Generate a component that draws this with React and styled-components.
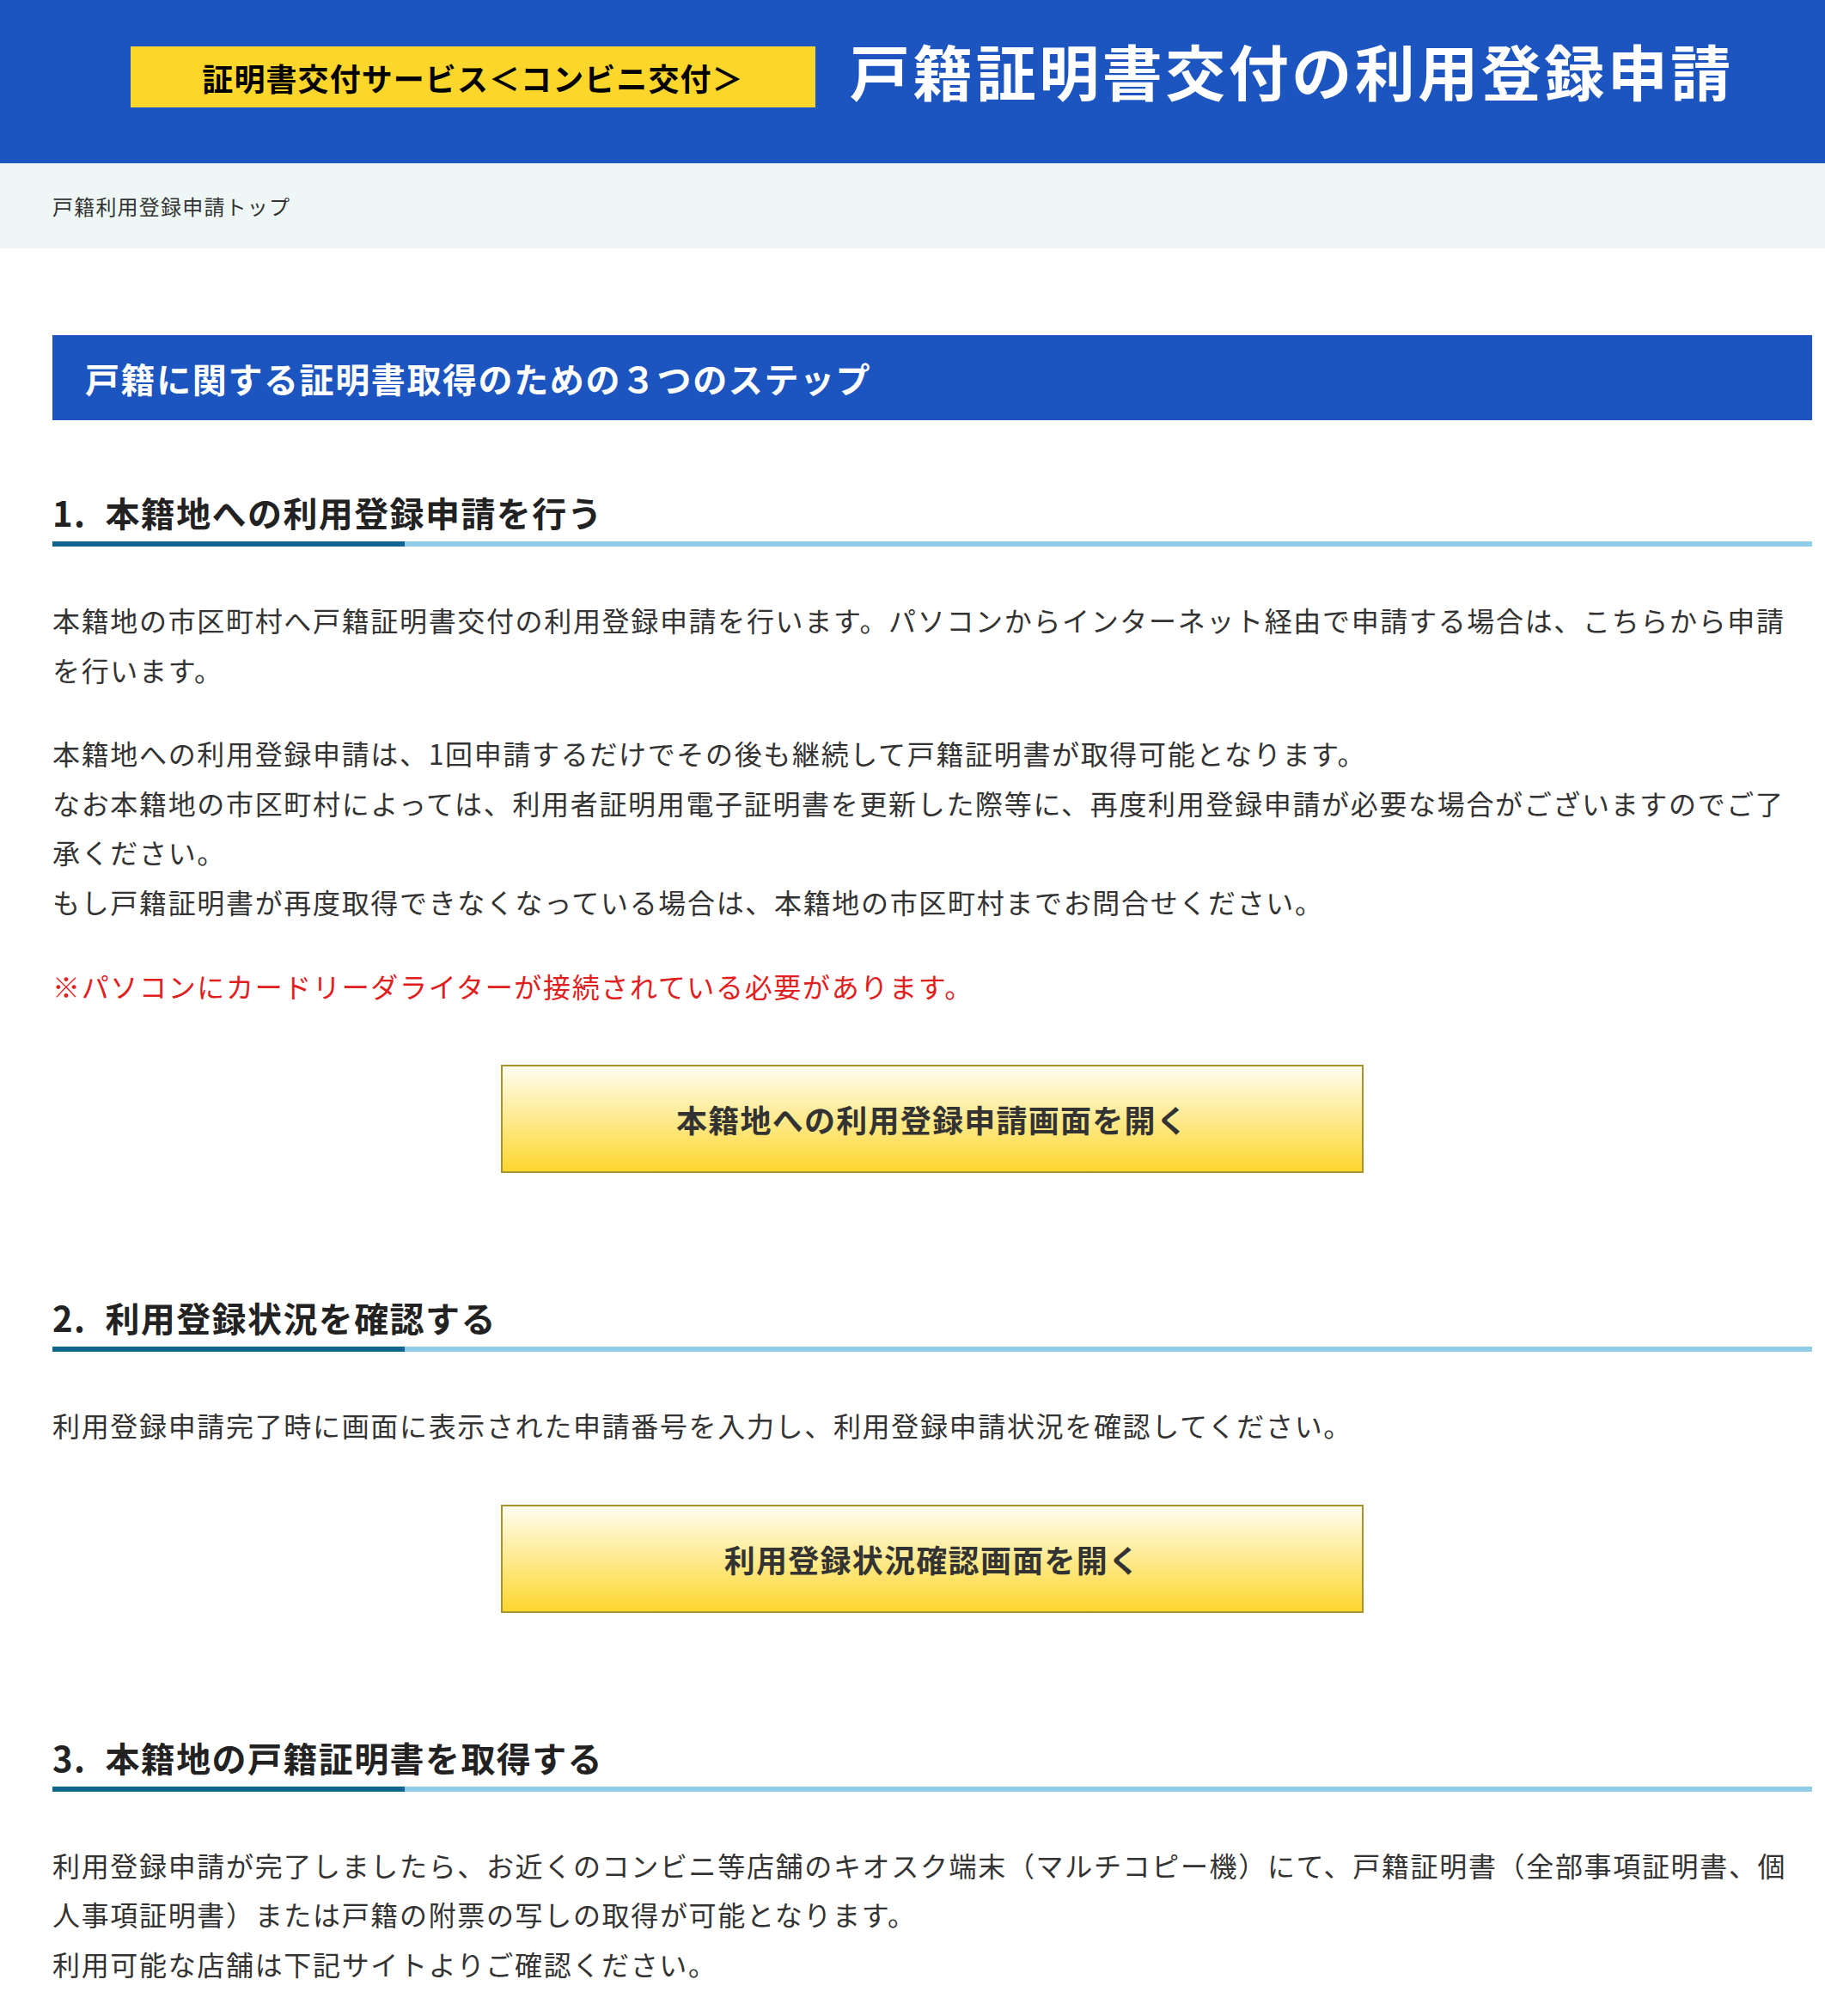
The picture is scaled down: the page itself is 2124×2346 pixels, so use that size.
import React from 'react';
import styled, {createGlobalStyle} from 'styled-components';

const GlobalStyle = createGlobalStyle`
  body {
    margin: 0;
    background: #fff;
    color: #333;
    font-family: "Noto Sans CJK JP", "Noto Sans", sans-serif;
    text-spacing-trim: space-all;
  }
`;

const Header = styled.header`
  background: #1c55c0;
  height: 190px;
`;

const HeaderInner = styled.div`
  width: 2048px;
  margin-left: 61px;
  height: 100%;
  box-sizing: border-box;
  padding-bottom: 11px;
  display: flex;
  align-items: center;
  justify-content: center;
  gap: 40px;
`;

const Badge = styled.div`
  background: #fcd62a;
  height: 71px;
  padding: 0 83px;
  display: flex;
  align-items: center;
  font-size: 36px;
  font-weight: 700;
  color: #000;
  letter-spacing: 0.03em;
`;

const Title = styled.h1`
  margin: 0 0 15px;
  color: #fff;
  font-size: 70px;
  font-weight: 700;
  line-height: 1;
  letter-spacing: 0.05em;
`;

const Breadcrumb = styled.nav`
  background: #eef7f5;
  height: 99px;
  padding: 0 61px;
  display: flex;
  align-items: center;
  font-size: 24px;
  letter-spacing: 0.05em;
  color: #333;
`;

const Main = styled.main`
  width: 2048px;
  margin-left: 61px;
  padding: 101px 0 120px;
`;

const StepsTitle = styled.h2`
  margin: 0;
  background: #1c55c0;
  color: #fff;
  font-size: 40px;
  font-weight: 700;
  line-height: 60px;
  letter-spacing: 0.04em;
  padding: 20px 38px 19px;
`;

const Section = styled.section`
  margin-top: 138px;
  &:first-of-type {
    margin-top: 77px;
  }
`;

const StepHeading = styled.h3`
  margin: 0;
  font-size: 40px;
  font-weight: 700;
  line-height: 60px;
  letter-spacing: 0.035em;
  color: #222;
  padding-bottom: 10px;
  background: linear-gradient(to right, #0f6591 20%, #8fcde8 20%) left bottom / 100% 6px no-repeat;
`;

const Num = styled.span`
  margin-right: 22px;
`;

const Text = styled.p`
  margin: 40px 0 0;
  font-size: 32px;
  line-height: 1.8;
  letter-spacing: 0.052em;
  color: ${p => (p.$note ? '#e0201e' : '#333')};

  ${StepHeading} + & {
    margin-top: 57px;
  }
`;

const OpenButton = styled.a`
  display: flex;
  align-items: center;
  justify-content: center;
  width: 1004px;
  height: 126px;
  box-sizing: border-box;
  margin: 63px auto 0;
  border: 2px solid #a8942f;
  background: linear-gradient(#fffdf0, #fdd72e);
  font-size: 36px;
  font-weight: 700;
  letter-spacing: 0.035em;
  color: #333;
  text-decoration: none;
  cursor: pointer;
`;

export default function App() {
  return (
    <>
      <GlobalStyle />
      <Header>
        <HeaderInner>
          <Badge>証明書交付サービス＜コンビニ交付＞</Badge>
          <Title>戸籍証明書交付の利用登録申請</Title>
        </HeaderInner>
      </Header>
      <Breadcrumb>戸籍利用登録申請トップ</Breadcrumb>
      <Main>
        <StepsTitle>戸籍に関する証明書取得のための３つのステップ</StepsTitle>

        <Section>
          <StepHeading><Num>1.</Num>本籍地への利用登録申請を行う</StepHeading>
          <Text>
            本籍地の市区町村へ戸籍証明書交付の利用登録申請を行います。パソコンからインターネット経由で申請する場合は、こちらから申請を行います。
          </Text>
          <Text>
            本籍地への利用登録申請は、1回申請するだけでその後も継続して戸籍証明書が取得可能となります。<br />
            なお本籍地の市区町村によっては、利用者証明用電子証明書を更新した際等に、再度利用登録申請が必要な場合がございますのでご了承ください。<br />
            もし戸籍証明書が再度取得できなくなっている場合は、本籍地の市区町村までお問合せください。
          </Text>
          <Text $note>※パソコンにカードリーダライターが接続されている必要があります。</Text>
          <OpenButton>本籍地への利用登録申請画面を開く</OpenButton>
        </Section>

        <Section>
          <StepHeading><Num>2.</Num>利用登録状況を確認する</StepHeading>
          <Text>利用登録申請完了時に画面に表示された申請番号を入力し、利用登録申請状況を確認してください。</Text>
          <OpenButton>利用登録状況確認画面を開く</OpenButton>
        </Section>

        <Section>
          <StepHeading><Num>3.</Num>本籍地の戸籍証明書を取得する</StepHeading>
          <Text>
            利用登録申請が完了しましたら、お近くのコンビニ等店舗のキオスク端末（マルチコピー機）にて、戸籍証明書（全部事項証明書、個人事項証明書）または戸籍の附票の写しの取得が可能となります。<br />
            利用可能な店舗は下記サイトよりご確認ください。
          </Text>
        </Section>
      </Main>
    </>
  );
}
